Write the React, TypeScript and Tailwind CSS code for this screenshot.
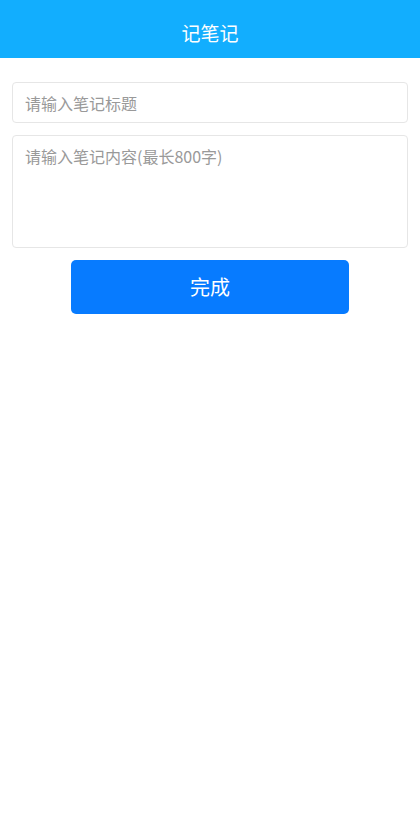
export default function App() {
  return (
    <div
      className="min-h-[838px] w-full bg-white"
      style={{ fontFamily: '"Noto Sans CJK SC", "Noto Sans", sans-serif' }}
    >
      <header className="flex h-[58px] items-center justify-center bg-[#12aefe] pt-[8px]">
        <h1 className="text-[19px] font-normal text-white">记笔记</h1>
      </header>

      <main className="flex flex-col px-3 pt-6">
        <input
          type="text"
          placeholder="请输入笔记标题"
          className="h-[41px] w-full rounded-[4px] border border-[#e6e6e6] px-3 text-[16px] text-[#333] outline-none placeholder:text-[#999]"
        />
        <textarea
          placeholder="请输入笔记内容(最长800字)"
          className="mt-3 h-[113px] w-full resize-none rounded-[4px] border border-[#e6e6e6] px-3 py-[8px] text-[16px] leading-[24px] text-[#333] outline-none placeholder:text-[#999]"
        />
        <button className="mx-auto mt-3 h-[54px] w-[278px] rounded-[5px] bg-[#077bff] text-[20px] text-white">
          完成
        </button>
      </main>
    </div>
  );
}
